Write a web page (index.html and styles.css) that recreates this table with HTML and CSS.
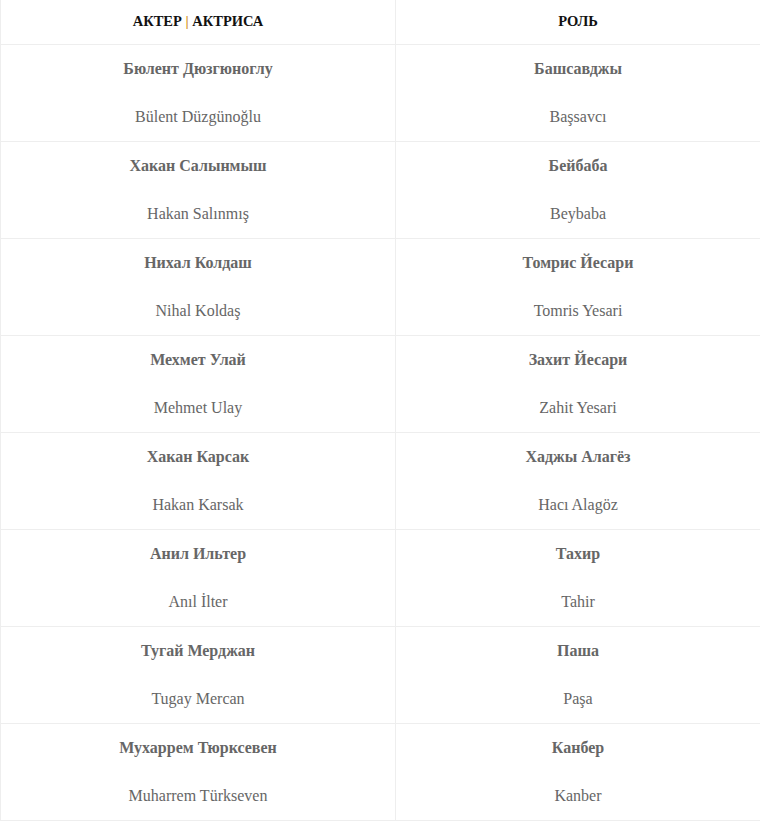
FILE: index.html
```html
<!DOCTYPE html>
<html lang="ru">
<head>
<meta charset="utf-8">
<link rel="stylesheet" href="styles.css">
</head>
<body>
<table class="cast">
  <colgroup><col class="c1"><col class="c2"></colgroup>
  <thead>
    <tr><th>АКТЕР <span class="sep">|</span> АКТРИСА</th><th>РОЛЬ</th></tr>
  </thead>
  <tbody>
    <tr><td><p class="ru">Бюлент Дюзгюноглу</p><p class="tr">Bülent Düzgünoğlu</p></td><td><p class="ru">Башсавджы</p><p class="tr">Başsavcı</p></td></tr>
    <tr><td><p class="ru">Хакан Салынмыш</p><p class="tr">Hakan Salınmış</p></td><td><p class="ru">Бейбаба</p><p class="tr">Beybaba</p></td></tr>
    <tr><td><p class="ru">Нихал Колдаш</p><p class="tr">Nihal Koldaş</p></td><td><p class="ru">Томрис Йесари</p><p class="tr">Tomris Yesari</p></td></tr>
    <tr><td><p class="ru">Мехмет Улай</p><p class="tr">Mehmet Ulay</p></td><td><p class="ru">Захит Йесари</p><p class="tr">Zahit Yesari</p></td></tr>
    <tr><td><p class="ru">Хакан Карсак</p><p class="tr">Hakan Karsak</p></td><td><p class="ru">Хаджы Алагёз</p><p class="tr">Hacı Alagöz</p></td></tr>
    <tr><td><p class="ru">Анил Ильтер</p><p class="tr">Anıl İlter</p></td><td><p class="ru">Тахир</p><p class="tr">Tahir</p></td></tr>
    <tr><td><p class="ru">Тугай Мерджан</p><p class="tr">Tugay Mercan</p></td><td><p class="ru">Паша</p><p class="tr">Paşa</p></td></tr>
    <tr><td><p class="ru">Мухаррем Тюрксевен</p><p class="tr">Muharrem Türkseven</p></td><td><p class="ru">Канбер</p><p class="tr">Kanber</p></td></tr>
  </tbody>
</table>
</body>
</html>
```
FILE: styles.css
```css
html, body {
  margin: 0;
  padding: 0;
  background: #fff;
}
body {
  font-family: "Liberation Serif", "Times New Roman", serif;
  color: #666;
}
.cast {
  width: 760px;
  border-collapse: collapse;
  table-layout: fixed;
}
.c1 { width: 395px; }
.c2 { width: 365px; }
.cast th,
.cast td {
  border: 1px solid #eee;
  text-align: center;
  vertical-align: top;
}
.cast thead th {
  border-top: none;
  height: 44px;
  padding: 0 10px;
  box-sizing: border-box;
  font-size: 14.5px;
  font-weight: bold;
  color: #111;
  line-height: 43px;
}
.sep { color: #d08c1c; }
.cast td {
  height: 95px;
  padding: 12px 10px 12px;
  box-sizing: border-box;
  font-size: 16px;
  line-height: 24px;
}
.cast td p {
  margin: 0;
}
.cast td p.ru {
  font-weight: bold;
  margin-bottom: 24px;
}
```
